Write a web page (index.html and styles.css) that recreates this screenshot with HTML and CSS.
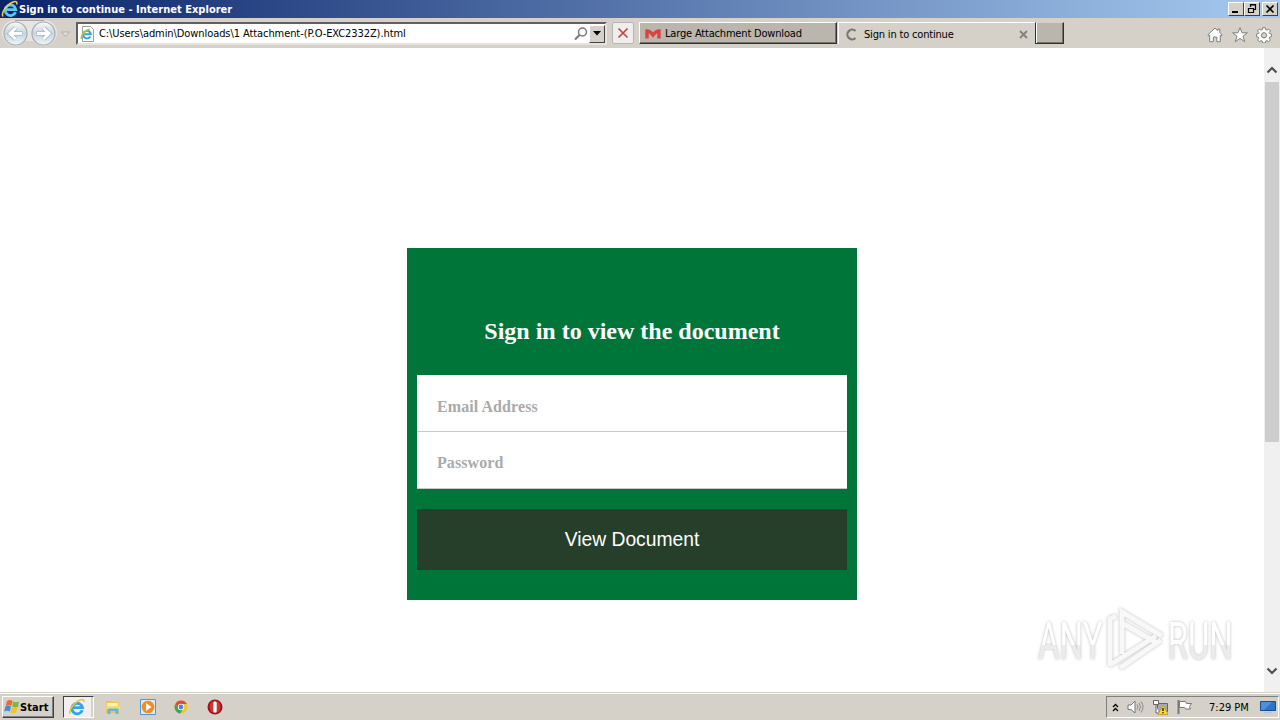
FILE: index.html
```html
<!DOCTYPE html>
<html lang="en">
<head>
    <meta charset="UTF-8">
    <title>Sign in to continue</title>
    <link rel="stylesheet" href="styles.css">
</head>
<body>
    <div class="titlebar">
        <svg class="title-icon" width="18" height="18" viewBox="0 0 18 18">
            <path d="M14.5 12.2A5.3 5.3 0 1 1 14.8 9.6H5.5" fill="none" stroke="#5fc3f4" stroke-width="2.8"/>
            <path d="M2.2 16.5C-.5 14 5 5 11.5 2.2c3-1.2 5-.8 4.2 2.3" fill="none" stroke="#f5cf3d" stroke-width="1.5"/>
        </svg>
        <span class="title-text">Sign in to continue - Internet Explorer</span>
        <div class="window-buttons">
            <span class="win-btn"><svg width="14" height="12"><path d="M3 9h6" stroke="#000" stroke-width="2"/></svg></span>
            <span class="win-btn"><svg width="14" height="12"><path d="M5.5 4V1.5h5v5H9M5 2h6M3.5 5.5h5v4h-5zM3 5.500h6" fill="none" stroke="#000" stroke-width="1.200"/></svg></span>
            <span class="win-btn close"><svg width="14" height="12"><path d="M3.5 2.5l7 7M10.5 2.5l-7 7" stroke="#000" stroke-width="1.7"/></svg></span>
        </div>
    </div>

    <div class="toolbar">
        <svg class="nav" width="76" height="30" viewBox="0 0 76 30">
            <defs>
                <linearGradient id="navFill" x1="0" y1="0" x2="0" y2="1">
                    <stop offset="0" stop-color="#fafbfc"/>
                    <stop offset=".5" stop-color="#c8d4de"/>
                    <stop offset="1" stop-color="#eef6fa"/>
                </linearGradient>
            </defs>
            <path d="M15 2h29a13 13 0 0 1 0 26q-7 0-10-5h-9q-3 5-10 5a13 13 0 0 1 0-26z" fill="#e6e5e3"/>
            <path d="M15 2.500h29" stroke="#aaa8a5"/>
            <circle cx="15.500" cy="15.500" r="11.500" fill="url(#navFill)" stroke="#a3acb4" stroke-width="1.200"/>
            <circle cx="43.500" cy="15.500" r="11.500" fill="url(#navFill)" stroke="#a3acb4" stroke-width="1.200"/>
            <path d="M22.500 15.500H10.500M15.500 10L10 15.500l5.500 5.500" fill="none" stroke="#a9b7c4" stroke-width="4.600"/>
            <path d="M22 15.500H10.500M15.500 10L10 15.500l5.500 5.500" fill="none" stroke="#fff" stroke-width="3"/>
            <path d="M36.500 15.500h12M43.500 10l5.500 5.500-5.500 5.500" fill="none" stroke="#a9b7c4" stroke-width="4.600"/>
            <path d="M37 15.500h11.500M43.500 10l5.500 5.500-5.500 5.500" fill="none" stroke="#fff" stroke-width="3"/>
            <path d="M61.500 14h8l-4 4.500z" fill="#e1ded9" stroke="#b3afa8"/>
        </svg>
        <div class="address">
            <svg width="16" height="18" viewBox="0 0 16 18">
                <path d="M2.500 1.500h8l3 3v12h-11z" fill="#fff" stroke="#9d9d9d"/>
                <path d="M10.300 11.500A3.800 3.800 0 1 1 10.800 9.300H4.500" fill="none" stroke="#35a3df" stroke-width="2"/>
                <path d="M1.500 14C0 11 5 5 10 4" fill="none" stroke="#b6cc2e" stroke-width="1.500"/>
            </svg>
            <span class="url">C:\Users\admin\Downloads\1 Attachment-(P.O-EXC2332Z).html</span>
            <svg class="search" width="14" height="14" viewBox="0 0 14 14"><circle cx="8.500" cy="5" r="4" fill="none" stroke="#777" stroke-width="1.500"/><path d="M5.500 8L1 12.500" stroke="#777" stroke-width="2"/></svg>
            <span class="dropdown"><svg width="8" height="5"><path d="M0 0h8L4 4.500z"/></svg></span>
        </div>
        <div class="stop"><svg width="12" height="12" viewBox="0 0 12 12"><path d="M1.500 1.500l9 9M10.500 1.500l-9 9" stroke="#c2423e" stroke-width="1.600"/></svg></div>
        <div class="tab tab-back">
            <svg width="16" height="12" viewBox="0 0 16 12"><path d="M2 10.500V3q3 0 6 4 3-4 6-4v7.500" fill="none" stroke="#d9443f" stroke-width="3.400"/></svg>
            <span>Large Attachment Download</span>
        </div>
        <div class="tab tab-active">
            <svg width="13" height="13" viewBox="0 0 13 13"><path d="M10.500 3A4.800 4.800 0 1 0 10.500 10" fill="none" stroke="#777" stroke-width="2.200"/></svg>
            <span>Sign in to continue</span>
            <svg class="tab-close" width="9" height="9" viewBox="0 0 9 9"><path d="M1 1l7 7M8 1L1 8" stroke="#85827e" stroke-width="1.900"/></svg>
        </div>
        <div class="tab tab-new"></div>
        <div class="tools">
            <svg width="16" height="16" viewBox="0 0 16 16"><path d="M.8 8L8 1l2.800 2.700V2h2v3.500L15.200 8l-1 1-.9-.8v6.500H9.800V10H6.300v4.700H2.700V8.200l-.9.800z" fill="#fff" stroke="#817e7a"/></svg>
            <svg width="16" height="16" viewBox="0 0 16 16"><path d="M8 .8l2 5h5.300L11 9.200l1.700 5.500L8 11.400l-4.700 3.300L5 9.200.7 5.800H6z" fill="#fff" stroke="#817e7a"/></svg>
            <svg width="16" height="16" viewBox="0 0 16 16"><path d="M6.700.7h2.600l.4 2 1.200.5 1.700-1.200 1.800 1.800-1.200 1.700.5 1.200 1.900.4v2.600l-1.900.4-.5 1.200 1.200 1.700-1.800 1.800-1.700-1.200-1.200.5-.4 1.900H6.700l-.4-1.900-1.200-.5-1.700 1.200L1.600 13l1.200-1.700-.5-1.200-1.900-.4V7.100l1.900-.4.5-1.200-1.200-1.700L3.400 2l1.700 1.200 1.200-.5z" fill="#fff" stroke="#817e7a"/><circle cx="8" cy="8.300" r="2.600" fill="#d5d0c8" stroke="#817e7a"/></svg>
        </div>
    </div>

    <div class="viewport">
        <div class="page">
            <form class="card">
                <h1>Sign in to view the document</h1>
                <input class="field" type="text" placeholder="Email Address">
                <input class="field field-last" type="password" placeholder="Password">
                <button class="submit" type="button">View Document</button>
            </form>
        </div>
        <div class="scrollbar">
            <svg class="arrow-up" width="12" height="8"><path d="M1.500 6.500L6 2l4.500 4.500" fill="none" stroke="#505050" stroke-width="2.200"/></svg>
            <div class="thumb"></div>
            <svg class="arrow-down" width="12" height="8"><path d="M1.500 1.500L6 6l4.500-4.500" fill="none" stroke="#505050" stroke-width="2.200"/></svg>
        </div>
        <svg class="watermark" width="225" height="80" viewBox="0 0 225 80">
            <defs>
                <linearGradient id="mark" x1="0" y1="0" x2="0" y2="1">
                    <stop offset=".55" stop-color="#fff"/>
                    <stop offset=".56" stop-color="#ececec"/>
                </linearGradient>
            </defs>
            <g class="mark-text" fill="url(#mark)" transform="scale(.62 1)">
                <text x="13" y="53" textLength="104" lengthAdjust="spacingAndGlyphs">ANY</text>
                <text x="222" y="53" textLength="105" lengthAdjust="spacingAndGlyphs">RUN</text>
            </g>
            <g class="mark-logo" fill="none" stroke-width="5">
                <path d="M80 60V13l6-3"/>
                <path d="M92 48V6l40 24M92 17l35 20M131 34L90 62M126 30L80 59"/>
            </g>
        </svg>
    </div>

    <div class="taskbar">
        <div class="start">
            <svg width="17" height="16" viewBox="0 0 17 16">
                <path d="M3 2q3-2 5.500 0L7.300 7Q5 5.500 1.700 7z" fill="#ef6a2a"/>
                <path d="M9 2.500q3 1.500 6 0L14 7.800q-3 1.300-5.700-.3z" fill="#79b93b"/>
                <path d="M1.400 7.500q3-1.500 5.600 0l-1.300 5q-2.500-1.700-5.500 0z" fill="#3d8ed8"/>
                <path d="M7.700 8.200q3 1.500 5.700.3l-1.400 5q-2.800 1.400-5.500-.3z" fill="#f5c229"/>
            </svg>
            <span>Start</span>
        </div>
        <div class="task-active">
            <svg width="18" height="18" viewBox="0 0 18 18">
                <path d="M14.300 12.300A5.300 5.300 0 1 1 14.500 9.600H5.500" fill="none" stroke="#35a5e4" stroke-width="2.900"/>
                <path d="M2.300 16C0 14 5 5 11.500 2.200c3-1.200 5-.8 4.200 2" fill="none" stroke="#efc32f" stroke-width="1.500"/>
            </svg>
        </div>
        <div class="launchers">
            <svg width="16" height="16" viewBox="0 0 16 16"><path d="M1 2h6l1 1h6v11H1z" fill="#e8c65b"/><path d="M2 4h11v5H2z" fill="#fbf0ae"/><path d="M1 7h14v3H1z" fill="#f2da7b"/><path d="M2.500 15v-4q0-1.500 1.500-1.500h8q1.500 0 1.500 1.500v4h-3v-3h-5v3z" fill="#60b7dc"/></svg>
            <svg width="16" height="16" viewBox="0 0 16 16"><path d="M.5.5h15v15H.5z" fill="#dcebf7" stroke="#5296cf"/><circle cx="8" cy="8" r="6.300" fill="#f28c1e"/><path d="M6 4l5.500 4L6 12z" fill="#fff"/></svg>
            <svg width="14" height="14" viewBox="0 0 14 14"><circle cx="7" cy="7" r="6.500" fill="#f4c62c"/><path d="M1.300 4A6.500 6.500 0 0 1 12.800 4H7L4.500 8.500z" fill="#dd4b39"/><path d="M1.300 4A6.500 6.500 0 0 0 6.300 13.500L9.500 8.500 4.500 8.500z" fill="#3fa35b"/><circle cx="7" cy="7" r="3.200" fill="#fff"/><circle cx="7" cy="7" r="2.400" fill="#4a87d8"/></svg>
            <svg width="16" height="16" viewBox="0 0 16 16"><circle cx="8" cy="8" r="7.500" fill="#a40f16"/><ellipse cx="8" cy="8" rx="5.500" ry="6.200" fill="#cf3434"/><rect x="6.300" y="2.500" width="3.400" height="11" rx="1.500" fill="#fff"/></svg>
        </div>
        <div class="tray">
            <svg width="7" height="9" viewBox="0 0 7 9"><path d="M1 4l2.500-2.500L6 4M1 8l2.500-2.500L6 8" fill="none" stroke="#000" stroke-width="1.300"/></svg>
            <svg width="17" height="14" viewBox="0 0 17 14"><path d="M1 5h3l4-4v12L4 9.500H1z" fill="#fff" stroke="#777"/><path d="M10 4.500q2 2.500 0 5M12 3q3 4 0 8M14 1.500q4 5.500 0 11" fill="none" stroke="#8d8a85"/></svg>
            <svg width="16" height="16" viewBox="0 0 16 16"><path d="M5.500 4.500h10v8h-10z" fill="#aaa" stroke="#666"/><path d="M1.500 1.500h5v4h-5zM4 6v8h3" fill="#fff" stroke="#666"/><path d="M11 6l5 9.500H6z" fill="#ffdc28" stroke="#b39018" stroke-width=".7"/><path d="M11 9v3M11 13v1.300" stroke="#000" stroke-width="1.200"/></svg>
            <svg width="17" height="16" viewBox="0 0 17 16"><path d="M2.500 1v14" stroke="#777" stroke-width="2"/><path d="M3.500 2.500h6l1 2h5l-2 3 1 2.500h-5l-1-1.500h-5z" fill="#fff" stroke="#777"/></svg>
            <span class="clock">7:29 PM</span>
            <svg width="16" height="14" viewBox="0 0 16 14"><path d="M.5 1.500h15v9H.5z" fill="#2f73c4" stroke="#174c8e"/><path d="M1 2h11L4 10H1z" fill="#4c92da"/><path d="M4 12.500h8" stroke="#b3c5da" stroke-width="1.500"/></svg>
        </div>
    </div>
</body>
</html>
```
FILE: styles.css
```css
* {
    box-sizing: border-box;
}
body {
    margin: 0;
    width: 1280px;
    height: 720px;
    overflow: hidden;
    display: flex;
    flex-direction: column;
    background: #d5d0c8;
    font-family: Tahoma, "DejaVu Sans Condensed", "DejaVu Sans", sans-serif;
    font-stretch: condensed;
    font-size: 11px;
    color: #000;
}
svg {
    display: block;
    flex: none;
}
span {
    white-space: nowrap;
}
.titlebar {
    height: 18px;
    display: flex;
    align-items: center;
    padding-left: 1px;
    background: linear-gradient(to right, #0a246a, #a6caf0);
    color: #fff;
    font-weight: bold;
}
.title-text {
    letter-spacing: 0.02px;
}
.window-buttons {
    display: flex;
    margin-left: auto;
    padding-right: 2px;
}
.win-btn {
    width: 16px;
    height: 14px;
    background: #d5d0c8;
    border: 1px solid;
    border-color: #fff #404040 #404040 #fff;
}
.close {
    margin-left: 2px;
}
.toolbar {
    height: 30px;
    display: flex;
    background: #d5d0c8;
}
.address {
    width: 531px;
    height: 23px;
    margin-top: 4px;
    display: flex;
    align-items: center;
    padding-left: 2px;
    background: #fff;
    border: 2px solid;
    border-color: #606060 #e6e3de #e6e3de #606060;
}
.url {
    margin-left: 3px;
    letter-spacing: -0.08px;
}
.search {
    margin-left: auto;
    margin-right: 1px;
}
.dropdown {
    width: 16px;
    height: 18px;
    display: flex;
    align-items: center;
    justify-content: center;
    background: #d5d0c8;
    border: 1px solid;
    border-color: #fff #404040 #404040 #fff;
}
.stop {
    width: 22px;
    height: 22px;
    margin: 4px 5px 0;
    display: flex;
    align-items: center;
    justify-content: center;
    background: #efeeed;
    border: 1px solid #b8b6b3;
    border-radius: 2px;
}
.tab {
    height: 22px;
    margin-top: 4px;
    display: flex;
    align-items: center;
    border: 1px solid #fff;
    letter-spacing: -0.18px;
}
.tab-back {
    width: 198px;
    padding: 1px 0 0 5px;
    background: #bab5ad;
    border-right: 1px solid #303030;
    border-bottom: 1px solid #303030;
    box-shadow: inset -1px -1px #77736d;
}
.tab-back span {
    margin-left: 4px;
}
.tab-active {
    width: 197px;
    margin-left: 1px;
    padding: 1px 7px 0 7px;
    border-right: 0;
    border-bottom: 0;
}
.tab-active svg {
    margin-left: -1px;
}
.tab-active span {
    margin-left: 6px;
}
.tab-active .tab-close {
    margin-left: auto;
}
.tab-new {
    width: 29px;
    background: #bab5ad;
    border-color: #d5d0c8 #303030 #303030 #303030;
    box-shadow: inset 1px 0 #fff, inset -1px -1px #77736d;
}
.tools {
    display: flex;
    align-items: center;
    gap: 8.500px;
    margin-left: auto;
    padding: 4px 8px 0 0;
}
.viewport {
    position: relative;
    height: 644px;
    display: flex;
    background: #fff;
}
.page {
    width: 1264px;
    padding-top: 200px;
}
.card {
    width: 450px;
    height: 352px;
    margin: 0 auto;
    padding: 70px 10px 30px;
    background: #00753a;
}
h1 {
    margin: 0 0 30px;
    font: bold 24px/27px "Liberation Serif", serif;
    text-align: center;
    color: #fff;
}
.field {
    display: block;
    width: 100%;
    height: 57px;
    padding: 7px 20px 0;
    border: 0;
    border-bottom: 1px solid #c8cac9;
    border-radius: 0;
    background: #fff;
    font: bold 16px "Liberation Serif", serif;
    letter-spacing: 0.08px;
}
.field-last {
    padding-top: 5px;
}
.field::placeholder {
    color: #aaa;
}
.submit {
    display: block;
    width: 100%;
    height: 61px;
    margin-top: 20px;
    padding: 0;
    border: 0;
    background: #263f2b;
    color: #fff;
    font: 19.3px "Liberation Sans", sans-serif;
}
.scrollbar {
    width: 16px;
    display: flex;
    flex-direction: column;
    align-items: center;
    background: #f0f0f0;
}
.arrow-up {
    margin: 18px 0 8px;
}
.thumb {
    width: 14px;
    height: 360px;
    background: #cdcdcd;
}
.arrow-down {
    margin-top: auto;
    margin-bottom: 17px;
}
.watermark {
    position: absolute;
    left: 1030px;
    top: 558px;
    filter: drop-shadow(0 0 1.500px #bbb);
}
.mark-text {
    font: 52px Roboto, sans-serif;
}
.mark-logo {
    stroke: #f8f8f8;
}
.taskbar {
    height: 28px;
    display: flex;
    align-items: center;
    padding: 1px 1px 0 2px;
    border-top: 1px solid #d5d0c8;
    box-shadow: inset 0 1px #fff;
}
.start {
    width: 52px;
    height: 22px;
    display: flex;
    align-items: center;
    padding-left: 1px;
    border: 1px solid;
    border-color: #fff #404040 #404040 #fff;
    box-shadow: inset -1px -1px #808080;
    font-weight: bold;
}
.start span {
    margin-left: -1px;
    letter-spacing: 0.1px;
}
.task-active {
    width: 31px;
    height: 22px;
    margin-left: 9px;
    display: flex;
    align-items: center;
    padding-left: 4px;
    background: linear-gradient(to right, #f2f0ed 27px, #d5d0c8 27px);
    border: 1px solid;
    border-color: #404040 #fff #fff #404040;
}
.launchers {
    display: flex;
    align-items: center;
    gap: 18.500px;
    margin-left: 11px;
}
.tray {
    width: 173px;
    height: 22px;
    margin-left: auto;
    display: flex;
    align-items: center;
    gap: 8px;
    padding-left: 5px;
    border: 1px solid;
    border-color: #808080 #fff #fff #808080;
}
.clock {
    margin-left: 8px;
    margin-right: 3px;
}
```
